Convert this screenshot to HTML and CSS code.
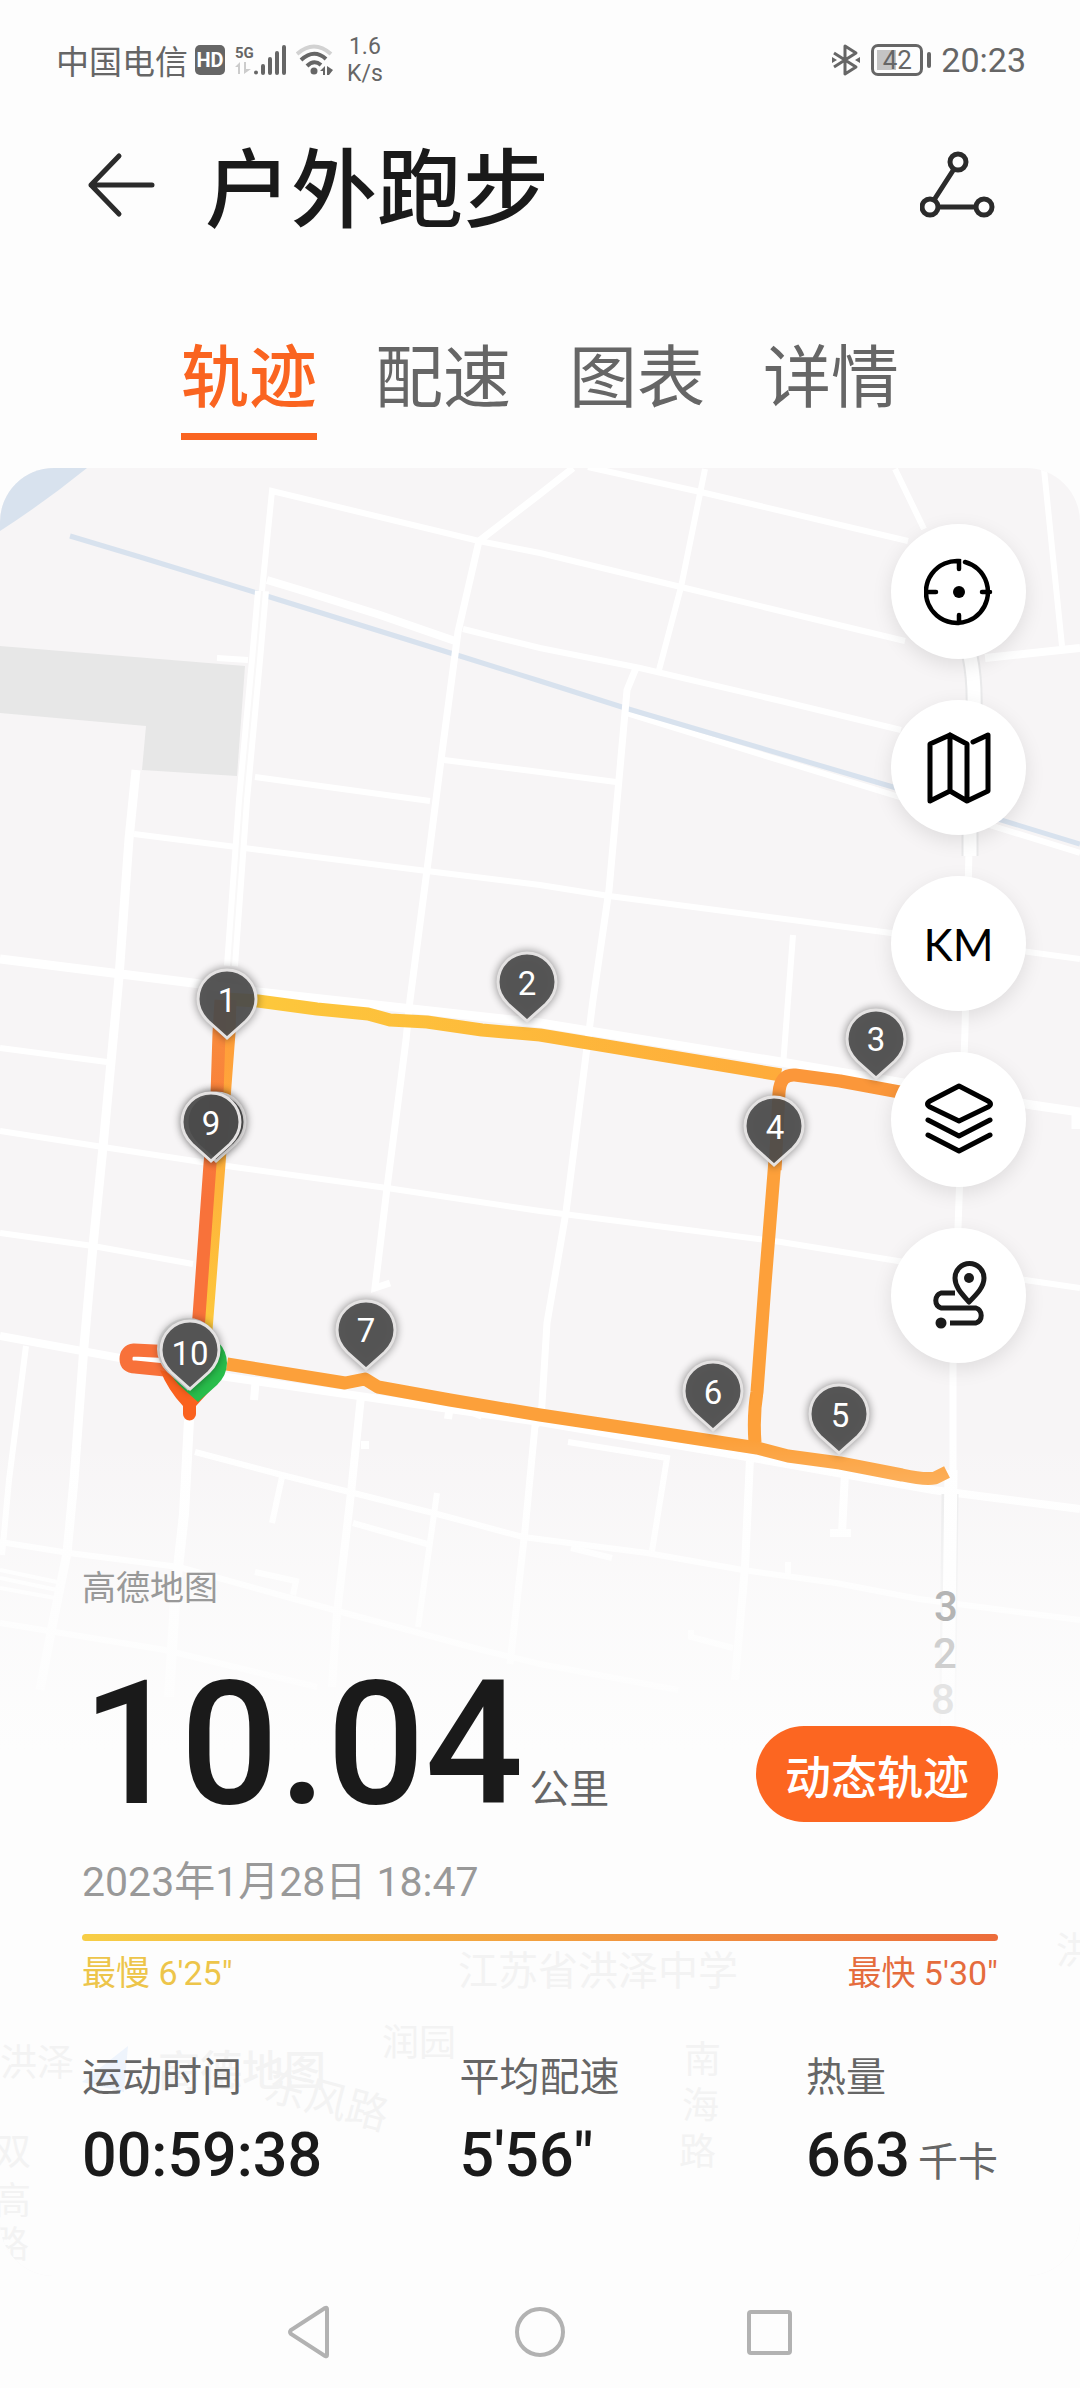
FILE: index.html
```html
<!DOCTYPE html>
<html lang="zh-CN">
	<head>
		<meta charset="UTF-8">
		<meta name="viewport" content="width=device-width, initial-scale=1">
		<title>户外跑步</title>
		<link rel="stylesheet" href="styles.css">
	</head>
	<body>
		<!-- 状态栏 -->
		<div class="status">
			<span class="carrier">中国电信</span>
			<span class="hd">HD</span>
			<div class="signal">
				<div class="net">
					<span>5G</span>
					<svg width="16" height="12" viewBox="0 0 16 12" fill="#ccc"><path d="M0 5L5 0V12H3V5ZM9 0H11V7H16L9 12Z"/></svg>
				</div>
				<svg width="34" height="32" viewBox="0 0 34 32" fill="none" stroke="#666" stroke-width="4" stroke-linecap="round">
					<path d="M3 28.500V28.600M10 22V29M17 15V29M24 9V29M31 3V29"/>
				</svg>
			</div>
			<svg class="wifi" width="38" height="34" viewBox="0 0 38 34" fill="none" stroke="#666" stroke-width="4">
				<path stroke="#d2d2d2" d="M1 11Q18 -4 35 11"/>
				<path d="M5 17Q18 5 30 16"/>
				<path d="M11 23Q18 16 25 22"/>
				<circle cx="18" cy="28" r="3.500" fill="#666" stroke="none"/>
				<path fill="#666" stroke="none" d="M24 28L29 23V32H27V28ZM31 23L37 27L33 32H31Z"/>
			</svg>
			<div class="speed"><span>1.6</span><span>K/s</span></div>
			<svg class="bt" width="28" height="34" viewBox="0 0 28 34" fill="none" stroke="#666" stroke-width="3" stroke-linejoin="round">
				<path d="M2 10L24 24L13 31V3L24 10L2 24"/>
				<path d="M0 14L5 17L0 20ZM28 14L23 17L28 20Z" fill="#666" stroke="none"/>
			</svg>
			<div class="battery"><span>42</span></div>
			<span class="clock">20:23</span>
		</div>

		<!-- 标题 -->
		<header class="top">
			<button class="icon-btn" aria-label="返回">
				<svg width="70" height="70" viewBox="0 0 70 70" fill="none" stroke="#2b2b2b" stroke-width="5" stroke-linecap="round" stroke-linejoin="round">
					<path d="M66 35H5M33 6L5 35L33 64"/>
				</svg>
			</button>
			<h1>户外跑步</h1>
			<button class="icon-btn" aria-label="分享">
				<svg width="76" height="70" viewBox="0 0 76 70" fill="none" stroke="#2b2b2b" stroke-width="5">
					<circle cx="38" cy="12" r="8"/><circle cx="10" cy="57" r="8"/><circle cx="64" cy="57" r="8"/>
					<path d="M34 19L14 50M18 57H56"/>
				</svg>
			</button>
		</header>

		<nav class="tabs">
			<a class="on" href="#track">轨迹</a>
			<a href="#pace">配速</a>
			<a href="#chart">图表</a>
			<a href="#detail">详情</a>
		</nav>

		<main class="panel" id="track">
			<!-- 地图 -->
			<svg class="map" viewBox="0 468 1080 1808" font-family="Roboto, 'Noto Sans CJK SC', sans-serif">
				<defs>
					<linearGradient id="fade" x1="0" y1="0" x2="0" y2="1">
						<stop offset="0" stop-color="#fdfdfd" stop-opacity="0"/>
						<stop offset="0.5" stop-color="#fdfdfd" stop-opacity="0.6"/>
						<stop offset="1" stop-color="#fdfdfd"/>
					</linearGradient>
					<linearGradient id="north" gradientUnits="userSpaceOnUse" x1="255" y1="0" x2="785" y2="0">
						<stop offset="0" stop-color="#fdc83c"/>
						<stop offset="1" stop-color="#feab3a"/>
					</linearGradient>
					<linearGradient id="west" gradientUnits="userSpaceOnUse" x1="0" y1="1030" x2="0" y2="1200">
						<stop offset="0" stop-color="#f98b3c"/>
						<stop offset="1" stop-color="#f8723a"/>
					</linearGradient>
					<linearGradient id="west2" gradientUnits="userSpaceOnUse" x1="0" y1="1030" x2="0" y2="1330">
						<stop offset="0" stop-color="#ff9d3a"/>
						<stop offset="1" stop-color="#fdc83c"/>
					</linearGradient>
					<filter id="blur" x="-40%" y="-40%" width="180%" height="180%"><feGaussianBlur stdDeviation="4"/></filter>
					<path id="drop" d="M0 -1L-19 -18Q-29 -28 -29 -40A29 29 0 0 1 29 -40Q29 -28 19 -18Z"/>
					<g id="pin">
						<use href="#drop" fill="#000" stroke="#000" stroke-width="4" opacity="0.400" filter="url(#blur)"/>
						<use href="#drop" fill="#4e4e4e" fill-opacity="0.900" stroke="#e4e2e2" stroke-width="3"/>
					</g>
				</defs>

				<rect x="0" y="468" width="1080" height="1808" fill="#f7f5f6"/>
				<path fill="#d8e2ee" d="M0 468H87Q45 502 0 531Z"/>
				<path fill="#e7e7e7" d="M0 646L245 666L237 776L142 770L146 726L0 713Z"/>

				<!-- 道路 -->
				<g fill="none" stroke="#fff" stroke-width="6">
					<path d="M626 713L893 795L1080 853"/>
					<path stroke="#d8e2ee" stroke-width="5" d="M70 536L140 557L257 593L460 656L540 681L625 708L893 787L1080 844"/>
					<path d="M262 591L272 491L479 541L540 553L681 587L826 622L905 641"/>
					<path stroke-width="7" d="M573 468L540 494L479 541L458 632L441 760L427 870L410 1000L406 1040L387 1188L375 1288L390 1283"/>
					<path stroke-width="8" d="M267 580L310 593L380 615L458 642"/>
					<path d="M463 629L540 648L640 668L781 701L901 730"/>
					<path d="M217 658L248 660M255 777L430 801M444 760L540 772L616 782"/>
					<path d="M134 834L427 871L540 885L609 896L891 933L1080 959"/>
					<path stroke-width="9" d="M136 770L129 839L119 977L103 1147L93 1246L84 1346L74 1480L67 1553L52 1627L40 1690"/>
					<path stroke-width="9" d="M0 959L193 983L258 992L540 1023L781 1062L1032 1105L1080 1112M1076 1112V1129"/>
					<path d="M0 1048L107 1062M0 1131L103 1147L234 1167L387 1188L540 1211L781 1242L898 1261L1032 1281L1080 1288"/>
					<path d="M0 1233L93 1246L193 1264"/>
					<path stroke-width="8" d="M0 1336L120 1358L227 1377L540 1422L753 1458L933 1490L1080 1509"/>
					<path d="M26 1346L9 1480L2 1555"/>
					<path d="M588 467L705 493L908 541M705 469L681 587L659 670M895 469L924 529M1044 469L1062 646"/>
					<path stroke-width="8" d="M985 658L1080 648"/>
					<path stroke-width="7" d="M636 668L627 690L623 735L609 890L593 1000L566 1212L547 1323L541 1420L535 1426L525 1530L510 1664"/>
					<path d="M793 935L783 1066"/>
					<path stroke-width="10" d="M189 1420L184 1514L176 1586L169 1697"/>
					<path d="M195 1452L282 1475L437 1514L523 1537L647 1553L743 1570L836 1583L919 1599L1080 1620"/>
					<path d="M282 1477L272 1523M353 1523L427 1544M437 1493L418 1627"/>
					<path stroke-width="8" d="M361 1396L351 1493L337 1613L332 1687M361 1445H369M256 1377L254 1400M450 1405L448 1419M480 1410L477 1418"/>
					<path d="M0 1542L69 1553L179 1567L334 1610L482 1650L540 1664L678 1690"/>
					<path stroke-width="4" d="M0 1570L62 1583M0 1578L62 1591M0 1588L55 1598"/>
					<path d="M0 1623L165 1650L317 1687M255 1572L296 1581L293 1595"/>
					<path d="M568 1442L667 1458L652 1551M571 1548L612 1558M691 1630V1637L733 1648M788 1562V1574"/>
					<path stroke-width="8" d="M750 1458L745 1567L735 1680M845 1473L842 1533M830 1533H851"/>
					<path stroke-width="7" d="M969 850L965 1030L959 1200L953 1365V1475"/>
				</g>
				<g fill="none">
					<path stroke="#fff" stroke-width="14" d="M262 591L256 660L243 800L231 966"/>
					<path stroke="#f9f8f8" stroke-width="2" d="M262 591L256 660L243 800L231 966"/>
					<path stroke="#e9e9ea" stroke-width="17" d="M970 656Q975 680 974 710M970 830V856M950 1494L947 1780"/>
					<path stroke="#fff" stroke-width="13" d="M970 656Q975 680 974 710M970 830V856M951 1470L947 1780"/>
				</g>

				<!-- 跑步轨迹 -->
				<g fill="none" stroke-width="13" stroke-linejoin="round">
					<path stroke="url(#north)" d="M225 999L258 1001L317 1009L368 1014L390 1020L427 1022L482 1030L540 1035L781 1075"/>
					<path stroke="#fb973a" d="M905 1093L840 1081L795 1075Q780 1074 779 1093L775 1170"/>
					<path stroke="#fda03a" d="M775 1160L765 1284L757 1392Q753 1415 755 1443"/>
					<path stroke="#fca03a" d="M227 1364L345 1383L365 1379L378 1387L450 1400L540 1415L660 1433L757 1448L788 1456L840 1463L902 1475Q925 1480 935 1478L947 1472"/>
					<path stroke="url(#west2)" d="M230 1000L229 1033L219 1164L206 1330"/>
					<path stroke="url(#west)" d="M221 1000L219 1033L217 1095L210 1164L198 1330"/>
					<path stroke="#fff" stroke-width="4" d="M134 1358L165 1361"/>
					<path stroke="#f8713a" d="M175 1352L134 1350Q126 1351 126 1359Q126 1367 135 1367L175 1371"/>
				</g>

				<!-- 终点和起点 -->
				<path fill="#fa611e" d="M160 1370Q168 1390 183 1406V1414A6 6 0 0 0 196 1414V1406L215 1385Z"/>
				<use href="#drop" x="198" y="1403" fill="#28bd4b"/>
				<use href="#drop" x="188" y="1389" fill="#e8e8e8" stroke="#e8e8e8" stroke-width="4"/>

				<!-- 公里标记 -->
				<g fill="#fff" font-size="33" text-anchor="middle">
					<use href="#pin" x="227" y="1039"/><text x="227" y="1012">1</text>
					<use href="#pin" x="527" y="1022"/><text x="527" y="995">2</text>
					<use href="#pin" x="876" y="1079"/><text x="876" y="1051">3</text>
					<use href="#pin" x="774" y="1166"/><text x="775" y="1139">4</text>
					<use href="#pin" x="839" y="1454"/><text x="840" y="1427">5</text>
					<use href="#pin" x="713" y="1431"/><text x="713" y="1404">6</text>
					<use href="#pin" x="366" y="1370"/><text x="366" y="1342">7</text>
					<use href="#pin" x="216" y="1162"/>
					<use href="#pin" x="211" y="1162"/><text x="211" y="1135">9</text>
					<use href="#pin" x="190" y="1390"/><text x="190" y="1365">10</text>
				</g>

				<!-- 底部渐隐 -->
				<rect x="0" y="1440" width="1080" height="310" fill="url(#fade)"/>
				<rect x="0" y="1749" width="1080" height="527" fill="#fdfdfd"/>

				<g font-size="42" font-weight="500" text-anchor="middle">
					<text x="946" y="1621" fill="#b4b4b4">3</text>
					<text x="945" y="1668" fill="#cfcfcf">2</text>
					<text x="943" y="1714" fill="#e4e4e4">8</text>
				</g>
				<path fill="#eef4fc" d="M82 2082L128 2046L124 2092Z"/>
				<g fill="#f3f3f3" font-size="37">
					<text x="458" y="1985" font-size="40">江苏省洪泽中学</text>
					<text x="1056" y="1964">洪</text>
					<text x="382" y="2056">润园</text>
					<text x="0" y="2076">洪泽</text>
					<text x="158" y="2086" font-size="42" font-weight="500">高德地图</text>
					<text x="262" y="2098" font-size="42" transform="rotate(15 262 2098)">东风路</text>
					<text x="684" y="2073">南</text><text x="682" y="2119">海</text><text x="679" y="2165">路</text>
					<text x="-6" y="2165">双</text><text x="-6" y="2214">高</text><text x="-8" y="2258">路</text>
				</g>
			</svg>

			<div class="overlay">
				<div class="tools">
					<button aria-label="定位">
						<svg width="70" height="70" viewBox="0 0 70 70" fill="none" stroke="#000" stroke-width="4.500" stroke-linecap="round">
							<path d="M35 12V4A31 31 0 1 0 41 5M4 35H12M66 35H58M35 66V58"/>
							<circle cx="35" cy="35" r="6" fill="#000" stroke="none"/>
						</svg>
					</button>
					<button aria-label="地图类型">
						<svg width="70" height="76" viewBox="0 0 70 76" fill="none" stroke="#000" stroke-width="5" stroke-linecap="round" stroke-linejoin="round">
							<path d="M26 5L6 14V71L26 61L43 71L64 61V5L49 12M26 5V61M26 5L43 14V71"/>
						</svg>
					</button>
					<button class="km">KM</button>
					<button aria-label="图层">
						<svg width="70" height="76" viewBox="0 0 70 76" fill="none" stroke="#000" stroke-width="5" stroke-linecap="round" stroke-linejoin="round">
							<path d="M35 4L64 19Q69 22 64 25L35 39L6 25Q1 22 6 19ZM4 38L35 54L66 38M4 53L35 69L66 53"/>
						</svg>
					</button>
					<button aria-label="轨迹">
						<svg width="70" height="76" viewBox="0 0 70 76" fill="none" stroke="#1a1a1a" stroke-width="5" stroke-linejoin="round">
							<path d="M45 44C38 36 31 29 31 20A14.500 14.500 0 0 1 60 20C60 29 53 36 45 44Z"/>
							<path d="M31 35H17A8 8 0 0 0 17 50H52A8 8 0 0 1 52 65H26"/>
							<circle cx="45" cy="20" r="5" fill="#1a1a1a" stroke="none"/>
							<circle cx="17" cy="65" r="5.500" fill="#1a1a1a" stroke="none"/>
						</svg>
					</button>
				</div>

				<section class="info">
					<p class="source">高德地图</p>
					<div class="main-row">
						<p class="distance">10.04<small>公里</small></p>
						<button class="play">动态轨迹</button>
					</div>
					<p class="date">2023年1月28日 18:47</p>
					<div class="bar"></div>
					<div class="range">
						<span class="slow">最慢 6'25"</span>
						<span class="fast">最快 5'30"</span>
					</div>
					<dl class="stats">
						<div><dt>运动时间</dt><dd>00:59:38</dd></div>
						<div><dt>平均配速</dt><dd>5'56"</dd></div>
						<div><dt>热量</dt><dd>663<small>千卡</small></dd></div>
					</dl>
				</section>
			</div>
		</main>

		<!-- 系统导航 -->
		<nav class="sysnav">
			<button aria-label="返回"><svg width="50" height="56" viewBox="0 0 50 56"><path d="M42 5V51Q42 53 40 52L6 30Q4 28 6 26L40 4Q42 3 42 5Z"/></svg></button>
			<button aria-label="主页"><svg width="50" height="56" viewBox="0 0 50 56"><circle cx="25" cy="28" r="23"/></svg></button>
			<button aria-label="最近任务"><svg width="50" height="56" viewBox="0 0 50 56"><rect x="4" y="8" width="41" height="41" rx="2"/></svg></button>
		</nav>
	</body>
</html>
```
FILE: styles.css
```css
*{
	margin: 0;
	padding: 0;
	box-sizing: border-box;
}
body{
	background-color: #fdfdfd;
	color: #1a1a1a;
	font-family: Roboto, "Noto Sans CJK SC", sans-serif;
}
button{
	border: none;
	background: none;
	font: inherit;
	color: inherit;
	cursor: pointer;
}
svg{
	display: block;
}

/* 状态栏 */
.status{
	display: flex;
	align-items: center;
	height: 120px;
	padding: 0 54px 0 56px;
	color: #666;
	font-size: 33px;
}
.hd{
	width: 30px;
	height: 30px;
	margin-left: 7px;
	border-radius: 5px;
	background-color: #666;
	color: #fff;
	font-size: 20px;
	font-weight: 700;
	line-height: 30px;
	text-align: center;
}
.signal{
	display: flex;
	margin-left: 10px;
}
.net{
	width: 18px;
	font-size: 15px;
	font-weight: 700;
	line-height: 18px;
}
.wifi{
	margin-left: 9px;
}
.speed{
	display: flex;
	flex-direction: column;
	margin-left: 13px;
	font-size: 23px;
	line-height: 27px;
	text-align: center;
}
.bt{
	margin-left: auto;
}
.battery{
	position: relative;
	width: 52px;
	height: 32px;
	margin: 0 18px 0 11px;
	border: 3px solid #666;
	border-radius: 7px;
	background: linear-gradient(#c4c4c4, #c4c4c4) 3px 3px / 19px 20px no-repeat;
	font-size: 26px;
	line-height: 26px;
	text-align: center;
}
.battery::after{
	content: "";
	position: absolute;
	right: -11px;
	top: 5px;
	width: 4px;
	height: 16px;
	border-radius: 2px;
	background-color: #666;
}
.clock{
	font-size: 34px;
}

/* 标题 */
.top{
	display: flex;
	align-items: center;
	height: 130px;
	padding: 0 84px 0 86px;
}
.top h1{
	flex: 1;
	margin-left: 49px;
	padding-top: 14px;
	font-size: 86px;
	font-weight: 500;
	line-height: 116px;
}

.tabs{
	display: flex;
	justify-content: center;
	gap: 58px;
	padding: 81px 0 28px;
}
.tabs a{
	padding-bottom: 5px;
	border-bottom: 7px solid transparent;
	color: #666;
	font-size: 68px;
	line-height: 97px;
	text-decoration: none;
}
.tabs .on{
	border-color: #fa6420;
	color: #fa6420;
	font-weight: 500;
}

/* 地图面板，地图和内容叠在同一格 */
.panel{
	display: grid;
	border-radius: 54px;
	overflow: hidden;
}
.panel > *{
	grid-area: 1 / 1;
}
.map{
	width: 100%;
	height: auto;
}
.overlay{
	display: flex;
	flex-direction: column;
	z-index: 1;
}
.tools{
	display: flex;
	flex-direction: column;
	align-items: flex-end;
	gap: 41px;
	padding: 56px 54px 0;
}
.tools button{
	display: flex;
	align-items: center;
	justify-content: center;
	width: 135px;
	height: 135px;
	border-radius: 50%;
	background-color: #fff;
	box-shadow: 0 6px 20px rgba(0, 0, 0, .1);
}
.tools .km{
	color: #000;
	font-family: Lato, Roboto, sans-serif;
	font-size: 44px;
}

.info{
	padding: 200px 82px 0;
}
.source{
	color: #999;
	font-size: 34px;
	line-height: 50px;
}
.main-row{
	display: flex;
	align-items: flex-end;
	justify-content: space-between;
	margin-top: 31px;
}
.distance{
	font-size: 173px;
	font-weight: 500;
	line-height: 200px;
}
.distance small{
	margin-left: 6px;
	color: #666;
	font-size: 40px;
	font-weight: 400;
	line-height: 1;
}
.play{
	width: 242px;
	height: 96px;
	margin-bottom: 22px;
	border-radius: 48px;
	background-color: #fc6621;
	color: #fff;
	font-size: 46px;
	font-weight: 500;
}
.date{
	margin-top: 8px;
	color: #999;
	font-size: 41px;
	line-height: 60px;
}
.bar{
	height: 7px;
	margin-top: 22px;
	border-radius: 4px;
	background: linear-gradient(90deg, #f7ce46, #f3a03f 50%, #ec6c3b);
}
.range{
	display: flex;
	justify-content: space-between;
	margin-top: 7px;
	font-size: 34px;
	line-height: 50px;
}
.slow{
	color: #edc54a;
}
.fast{
	color: #e56c3d;
}
.stats{
	display: grid;
	grid-template-columns: 378fr 347fr 191fr;
	margin-top: 50px;
}
.stats dt{
	color: #666;
	font-size: 40px;
	line-height: 60px;
}
.stats dd{
	margin-top: 9px;
	font-size: 61px;
	font-weight: 500;
	line-height: 76px;
	white-space: nowrap;
}
.stats small{
	margin-left: 8px;
	color: #666;
	font-size: 40px;
	font-weight: 400;
	line-height: 1;
}

.sysnav{
	display: flex;
	align-items: center;
	justify-content: center;
	gap: 180px;
	height: 112px;
}
.sysnav svg{
	fill: none;
	stroke: #b2b2b2;
	stroke-width: 4px;
}
```
